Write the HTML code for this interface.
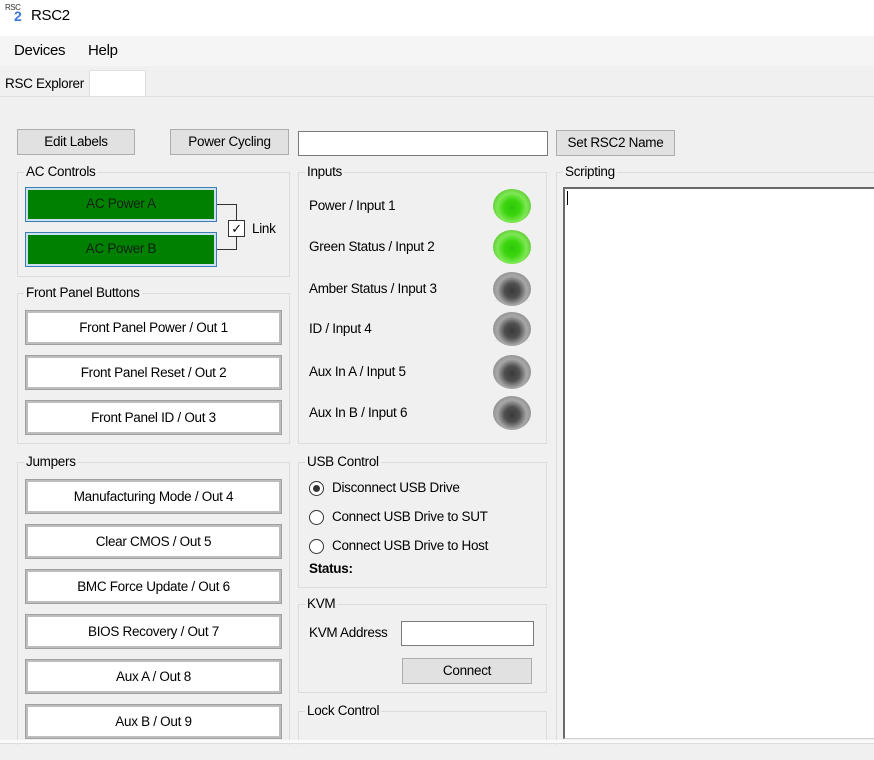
<!DOCTYPE html>
<html style="width:874px;height:760px;overflow:hidden"><head><style>
*{box-sizing:border-box;margin:0;padding:0}
body{width:874px;height:760px;position:relative;background:#f0f0f0;font-family:"Liberation Sans",sans-serif;font-size:13.5px;color:#000;overflow:hidden;letter-spacing:-0.3px}
.a{position:absolute}
.t{position:absolute;white-space:nowrap}
.grp{position:absolute;border:1px solid #dcdcdc}
.gl{position:absolute;top:-9px;left:6px;background:#f0f0f0;padding:0 2px;white-space:nowrap;line-height:16px}
.btn{position:absolute;background:#e1e1e1;border:1px solid #adadad;text-align:center;white-space:nowrap}
.wb{position:absolute;background:#fff;border:2px solid #bdbdbd;outline:1px solid #a0a0a0;text-align:center;white-space:nowrap;line-height:29px}
.gb{position:absolute;background:#008000;border:1px solid #3c7fb1;box-shadow:inset 0 0 0 2px #cde0f2;text-align:center;line-height:32px;color:#102010}
.led{position:absolute;width:38px;height:34px;border-radius:50%}
.on{background:radial-gradient(circle at 50% 55%,#2fc80a 0,#3cd50f 30%,#7ee855 55%,#59c22c 80%,#3a9a18 100%)}
.off{background:radial-gradient(circle at 50% 55%,#3a3a3a 0,#4f4f4f 28%,#a8a8a8 55%,#8a8a8a 80%,#6a6a6a 100%)}
.rad{position:absolute;width:15px;height:15px;border:1px solid #333;border-radius:50%;background:#fff}
</style></head><body>
<div class="a" style="left:0;top:0;width:874px;height:36px;background:#fff"></div>
<div class="t" style="left:5px;top:3px;font-size:8px;color:#333;letter-spacing:-0.5px">RSC</div>
<div class="t" style="left:14px;top:8px;font-size:14px;font-weight:bold;color:#3c78d8">2</div>
<div class="t" style="left:31px;top:7px;font-size:15px">RSC2</div>
<div class="a" style="left:0;top:36px;width:874px;height:30px;background:#f5f5f5"></div>
<div class="t" style="left:14px;top:42px;font-size:15px">Devices</div>
<div class="t" style="left:88px;top:42px;font-size:15px">Help</div>
<div class="t" style="left:5px;top:76px">RSC Explorer</div>
<div class="a" style="left:89px;top:70px;width:57px;height:27px;background:#fff;border:1px solid #e0e0e0;border-bottom:none"></div>
<div class="a" style="left:0;top:96px;width:874px;height:1px;background:#e0e0e0"></div>

<div class="btn" style="left:17px;top:129px;width:118px;height:26px;line-height:24px">Edit Labels</div>
<div class="btn" style="left:170px;top:129px;width:119px;height:26px;line-height:24px">Power Cycling</div>
<div class="a" style="left:298px;top:131px;width:250px;height:25px;background:#fff;border:1px solid #7a7a7a"></div>
<div class="btn" style="left:556px;top:130px;width:119px;height:26px;line-height:24px">Set RSC2 Name</div>

<div class="grp" style="left:17px;top:172px;width:273px;height:105px"><div class="gl">AC Controls</div></div>
<div class="gb" style="left:25px;top:187px;width:192px;height:35px">AC Power A</div>
<div class="gb" style="left:25px;top:232px;width:192px;height:35px">AC Power B</div>
<div class="a" style="left:217px;top:204px;width:20px;height:46px;border:1px solid #333;border-left:none"></div>
<div class="a" style="left:228px;top:220px;width:17px;height:17px;background:#fff;border:1px solid #333;text-align:center;line-height:15px;font-size:13px">✓</div>
<div class="t" style="left:252px;top:221px">Link</div>

<div class="grp" style="left:17px;top:293px;width:273px;height:151px"><div class="gl">Front Panel Buttons</div></div>
<div class="wb" style="left:26px;top:311px;width:255px;height:33px">Front Panel Power / Out 1</div>
<div class="wb" style="left:26px;top:356px;width:255px;height:33px">Front Panel Reset / Out 2</div>
<div class="wb" style="left:26px;top:401px;width:255px;height:33px">Front Panel ID / Out 3</div>

<div class="grp" style="left:17px;top:462px;width:273px;height:290px"><div class="gl">Jumpers</div></div>
<div class="wb" style="left:26px;top:480px;width:255px;height:33px">Manufacturing Mode / Out 4</div>
<div class="wb" style="left:26px;top:525px;width:255px;height:33px">Clear CMOS / Out 5</div>
<div class="wb" style="left:26px;top:570px;width:255px;height:33px">BMC Force Update / Out 6</div>
<div class="wb" style="left:26px;top:615px;width:255px;height:33px">BIOS Recovery / Out 7</div>
<div class="wb" style="left:26px;top:660px;width:255px;height:33px">Aux A / Out 8</div>
<div class="wb" style="left:26px;top:705px;width:255px;height:33px">Aux B / Out 9</div>

<div class="grp" style="left:298px;top:172px;width:249px;height:272px"><div class="gl">Inputs</div></div>
<div class="t" style="left:309px;top:198px">Power / Input 1</div>
<div class="t" style="left:309px;top:239px">Green Status / Input 2</div>
<div class="t" style="left:309px;top:281px">Amber Status / Input 3</div>
<div class="t" style="left:309px;top:321px">ID / Input 4</div>
<div class="t" style="left:309px;top:364px">Aux In A / Input 5</div>
<div class="t" style="left:309px;top:405px">Aux In B / Input 6</div>
<div class="led on" style="left:493px;top:189px"></div>
<div class="led on" style="left:493px;top:230px"></div>
<div class="led off" style="left:493px;top:272px"></div>
<div class="led off" style="left:493px;top:312px"></div>
<div class="led off" style="left:493px;top:355px"></div>
<div class="led off" style="left:493px;top:396px"></div>

<div class="grp" style="left:298px;top:462px;width:249px;height:126px"><div class="gl">USB Control</div></div>
<div class="rad" style="left:309px;top:481px"><div class="a" style="left:3px;top:3px;width:7px;height:7px;border-radius:50%;background:#333"></div></div>
<div class="t" style="left:332px;top:480px">Disconnect USB Drive</div>
<div class="rad" style="left:309px;top:510px"></div>
<div class="t" style="left:332px;top:509px">Connect USB Drive to SUT</div>
<div class="rad" style="left:309px;top:539px"></div>
<div class="t" style="left:332px;top:538px">Connect USB Drive to Host</div>
<div class="t" style="left:309px;top:561px;font-weight:bold">Status:</div>

<div class="grp" style="left:298px;top:604px;width:249px;height:89px"><div class="gl">KVM</div></div>
<div class="t" style="left:309px;top:625px">KVM Address</div>
<div class="a" style="left:401px;top:621px;width:133px;height:25px;background:#fff;border:1px solid #7a7a7a"></div>
<div class="btn" style="left:402px;top:658px;width:130px;height:26px;line-height:24px">Connect</div>
<div class="grp" style="left:298px;top:711px;width:249px;height:40px"><div class="gl">Lock Control</div></div>

<div class="grp" style="left:556px;top:172px;width:330px;height:580px"><div class="gl">Scripting</div></div>
<div class="a" style="left:563px;top:187px;width:320px;height:552px;background:#fff;border:1px solid #d0d0d0;border-left:2px solid #6a6a6a;border-top:2px solid #6a6a6a"></div>
<div class="a" style="left:567px;top:191px;width:1px;height:14px;background:#000"></div>

<div class="a" style="left:0;top:740px;width:874px;height:4px;background:#fafafa;border-bottom:1px solid #dcdcdc"></div>
<div class="a" style="left:0;top:745px;width:874px;height:15px;background:#f0f0f0"></div>
</body></html>
